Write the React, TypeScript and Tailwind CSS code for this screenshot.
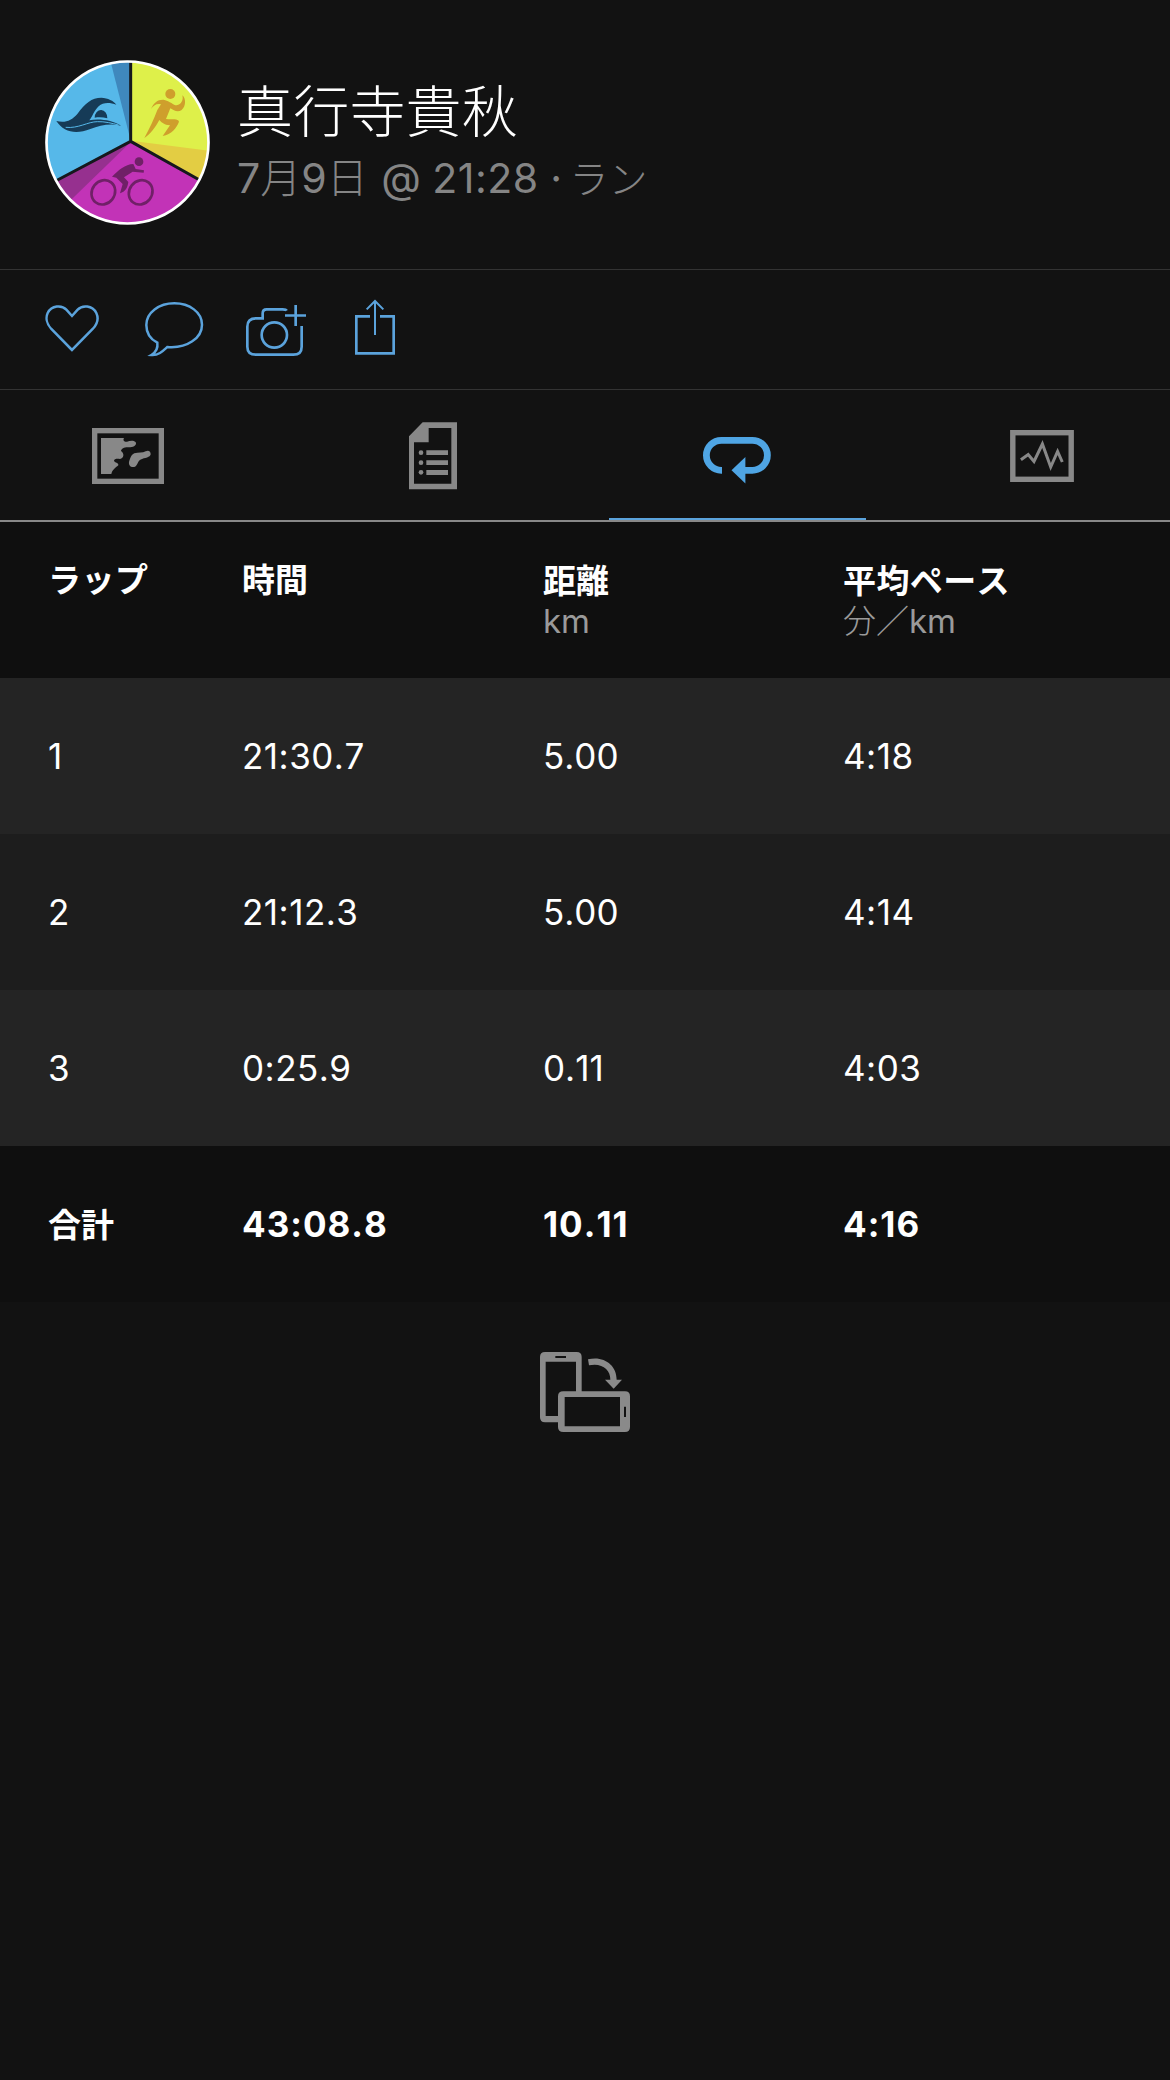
import type { ReactNode } from 'react'
import clsx from 'clsx'

const laps = [
  { lap: '1', time: '21:30.7', distance: '5.00', pace: '4:18' },
  { lap: '2', time: '21:12.3', distance: '5.00', pace: '4:14' },
  { lap: '3', time: '0:25.9', distance: '0.11', pace: '4:03' },
]

function Avatar() {
  return (
    <svg viewBox="45 30 495 495" className="w-[165px] h-[165px] shrink-0">
      <defs>
        <clipPath id="avatar-circle">
          <circle cx="292.5" cy="277.5" r="243" />
        </clipPath>
      </defs>
      <g clipPath="url(#avatar-circle)">
        <rect x="40" y="20" width="510" height="510" fill="#56b8e9" />
        <path d="M238 20H303V275Z" fill="#3f88bd" />
        <path d="M303 20H550V415L303 275Z" fill="#def04a" />
        <path d="M303 272L550 304V415Z" fill="#e3cd43" />
        <path d="M303 275L550 415V540H30V418Z" fill="#c233b7" />
        <path d="M303 275L30 418V500L125 448Z" fill="#96308f" />
        <path d="M302 20V274L60 402M302 274L530 402" fill="none" stroke="#15181c" strokeWidth="9" />

        {/* swimmer */}
        <g fill="#163b57">
          <path d="M79 213C105 220 125 212 142 192C165 160 185 143 214 143C234 144 250 152 259 164C240 157 219 156 206 169C192 182 188 199 178 211C205 205 248 210 273 227C238 219 210 227 181 237C138 254 101 247 79 213Z" />
          <path d="M194 203A19 24 0 0 1 232 205C219 201 206 201 194 203Z" />
        </g>
        <path d="M107 232C145 236 174 215 202 215C224 214 247 220 266 225" fill="none" stroke="#56b8e9" strokeWidth="3" />

        {/* runner */}
        <g fill="#cf9f2c">
          <circle cx="421" cy="132" r="15" />
          <path d="M363 177C371 158 383 148 401 149C421 153 430 166 440 166C454 164 461 149 457 136C468 145 469 169 454 181C442 188 431 181 421 175L408 207C427 209 444 205 447 215C439 235 425 252 398 258L420 226C402 225 394 216 388 210C376 233 360 253 343 264C359 235 372 207 382 180L393 163C379 160 370 167 363 177Z" />
        </g>

        {/* cyclist */}
        <g fill="none" stroke="#702067" strokeWidth="8">
          <ellipse cx="220" cy="427" rx="34" ry="38" transform="rotate(38 220 427)" />
          <ellipse cx="332" cy="427" rx="34" ry="38" transform="rotate(38 332 427)" />
        </g>
        <circle cx="327" cy="335" r="13" fill="#702067" />
        <path d="M246 380C266 360 285 343 310 342L317 357L342 361L341 368L308 365L282 382L295 396C293 413 286 425 270 430L278 402L259 383Z" fill="#702067" />
      </g>
      <circle cx="292.5" cy="277.5" r="243" fill="none" stroke="#fff" strokeWidth="8" />
    </svg>
  )
}

function ActionBar() {
  return (
    <div className="flex h-[120px] border-b border-[#333333] pt-7 pl-11 text-[#5ba3dc]">
      {/* like */}
      <svg viewBox="42 114 168 180" className="w-14 h-[60px]" fill="none" stroke="currentColor" strokeWidth="7.5">
        <path d="M126 270L64 207C49 191 47 172 53 159C65 136 95 134 109 149L126 168L143 149C157 134 187 136 199 159C205 172 204 190 188 207Z" />
      </svg>
      {/* comment */}
      <svg viewBox="342 114 180 180" className="ml-11 w-[60px] h-[60px]" fill="none" stroke="currentColor" strokeWidth="7.5">
        <path d="M382 248C360 237 349 217 349 195C349 158 387 130 433 130C479 130 516 157 516 194C516 233 473 266 412 261C400 272 386 287 364 285C380 276 384 263 382 248Z" />
      </svg>
      {/* add photo */}
      <svg viewBox="642 114 189 180" className="ml-10 w-[63px] h-[60px]" fill="none" stroke="currentColor" strokeWidth="8">
        <path d="M770 152C768 148 763 148 758 148H710C702 148 698 152 698 160V175H678C661 175 652 184 652 200V260C652 277 661 284 678 284H790C807 284 815 276 815 260V198" />
        <circle cx="733" cy="225" r="38" />
        <path d="M797 135V198M765 166.500H828" />
      </svg>
      {/* share */}
      <svg viewBox="972 114 126 180" className="ml-[47px] w-[42px] h-[60px]" fill="none" stroke="currentColor" strokeWidth="8">
        <path d="M1020 169H979V280H1091V169H1050" />
        <path d="M1035 124V225M1010 148L1035 123L1060 148" strokeWidth="6" />
      </svg>
    </div>
  )
}

function Tab({ active, children }: { active?: boolean; children: ReactNode }) {
  return (
    <div
      className={clsx(
        'flex w-[257px] justify-center border-b-2 pt-[30px]',
        active ? 'border-[#5ba3dc] text-[#4fa5e4]' : 'border-transparent text-[#888888]'
      )}
    >
      {children}
    </div>
  )
}

function Tabs() {
  return (
    <div className="flex h-[132px] justify-between border-b-2 border-[#888888]">
      <Tab>
        <svg viewBox="96 60 216 216" className="mr-px w-[72px] h-[72px]">
          <rect x="104" y="92" width="200" height="152" fill="none" stroke="currentColor" strokeWidth="16" />
          <path
            d="M123 114H192C188 121 192 126 201 125C211 121 223 120 228 128C229 138 219 141 206 142C194 141 184 145 183 153C194 160 192 175 180 177C171 176 163 176 162 182C164 188 177 188 175 196C166 204 157 209 154 222H123Z"
            fill="currentColor"
          />
          <path
            d="M223 160C235 157 248 159 257 154C266 150 272 154 272 163C271 173 255 173 241 179C232 184 232 200 222 201C210 202 206 195 207 186C210 176 213 165 223 160Z"
            fill="currentColor"
          />
        </svg>
      </Tab>
      <Tab>
        <svg viewBox="1047 60 144 216" className="w-12 h-[72px]" fill="currentColor">
          <path fillRule="evenodd" d="M1088 67H1192V268H1047V109ZM1106 84V127H1062V251H1174V84Z" />
          <circle cx="1083" cy="158" r="7" />
          <circle cx="1083" cy="188" r="7" />
          <circle cx="1083" cy="217" r="7" />
          <path d="M1099 151H1164V165H1099ZM1099 181H1164V195H1099ZM1099 210H1164V225H1099Z" />
        </svg>
      </Tab>
      <Tab active>
        <svg viewBox="702 420 70 72" className="w-[70px] h-[72px]">
          <path
            d="M722 470.300H721.400A15 15 0 0 1 721.400 440.300H752.400A15 15 0 0 1 752.400 470.300H742"
            fill="none"
            stroke="currentColor"
            strokeWidth="6.800"
          />
          <path d="M731.500 470.300L745.400 457V483.500Z" fill="currentColor" />
        </svg>
      </Tab>
      <Tab>
        <svg viewBox="1010 420 64 72" className="ml-0.5 w-16 h-[72px]" fill="none" stroke="currentColor">
          <rect x="1012.800" y="432.700" width="58.400" height="46.600" strokeWidth="5.400" />
          <path
            d="M1020.900 459.800L1028.200 454.500L1034 461.500L1042.400 444L1050.700 467L1057.600 451.500L1062.300 462"
            strokeWidth="3"
          />
        </svg>
      </Tab>
    </div>
  )
}

function RotateIcon() {
  return (
    <svg viewBox="57 63 276 246" className="mx-auto mt-[49px] w-[92px] h-[82px]" fill="#8a8a8a">
      <path
        fillRule="evenodd"
        d="M75 66H170Q185 66 185 81V190H168V95H77V258H120V277H75Q60 277 60 262V81Q60 66 75 66ZM106 78V84H138V78Z"
      />
      <path
        fillRule="evenodd"
        d="M130 184H315Q330 184 330 199V291Q330 306 315 306H130Q114 306 114 291V199Q114 184 130 184ZM134 201V289H300V201ZM312 230V261H318V230Z"
      />
      <path d="M204 88C250 76 290 104 290 149H306L281 176L255 149H271C272 118 244 97 207 106Z" />
    </svg>
  )
}

function Row({ className, children }: { className: string; children: ReactNode }) {
  return (
    <div className={clsx('grid h-[156px] grid-cols-[194px_301px_300px_1fr] pl-12', className)}>{children}</div>
  )
}

function LapTable() {
  return (
    <div className="text-[35px] text-white [font-kerning:none]">
      <Row className="bg-[#0f0f0f] pt-[38px] text-[33px] leading-[41px] font-bold">
        <div className="tracking-[0.5px]">ラップ</div>
        <div>時間</div>
        <div className="pt-px">
          距離
          <div className="-mt-px font-normal text-[#9a9a9a]">km</div>
        </div>
        <div className="pt-px">
          <span className="tracking-[0.4px]">平均ペース</span>
          <div className="-mt-px font-normal text-[#9a9a9a]">
            <span className="font-light">分／</span>km
          </div>
        </div>
      </Row>
      {laps.map((lap, i) => (
        <Row
          key={lap.lap}
          className={clsx('items-center tracking-[0.5px]', i % 2 === 0 ? 'bg-[#242424]' : 'bg-[#1d1d1d]')}
        >
          <div>{lap.lap}</div>
          <div>{lap.time}</div>
          <div className="tracking-normal">{lap.distance}</div>
          <div>{lap.pace}</div>
        </Row>
      ))}
      <Row className="items-center bg-[#0f0f0f] font-bold tracking-[1px]">
        <div className="pt-[3px] text-[33px] tracking-normal">合計</div>
        <div>43:08.8</div>
        <div>10.11</div>
        <div>4:16</div>
      </Row>
    </div>
  )
}

export default function App() {
  return (
    <div
      lang="ja"
      className="min-h-[2080px] w-[1170px] bg-[#121212] font-['Inter','Noto_Sans_CJK_JP',sans-serif]"
    >
      <div className="flex h-[270px] border-b border-[#333333] pt-[60px] pl-[45px]">
        <Avatar />
        <div className="ml-[27px] pt-[22px]">
          <div className="text-[56px] leading-[60px] font-light tracking-[0.2px] text-white">真行寺貴秋</div>
          <div className="mt-[7px] text-[41px] leading-[58px] text-[#858585]">
            7<span className="font-light">月</span>9<span className="mr-0.5 font-light">日</span> @{' '}
            <span className="tracking-[0.5px]">21:28</span> ·{' '}
            <span className="-ml-1 text-[39px] font-light">ラン</span>
          </div>
        </div>
      </div>
      <ActionBar />
      <Tabs />
      <LapTable />
      <RotateIcon />
    </div>
  )
}
